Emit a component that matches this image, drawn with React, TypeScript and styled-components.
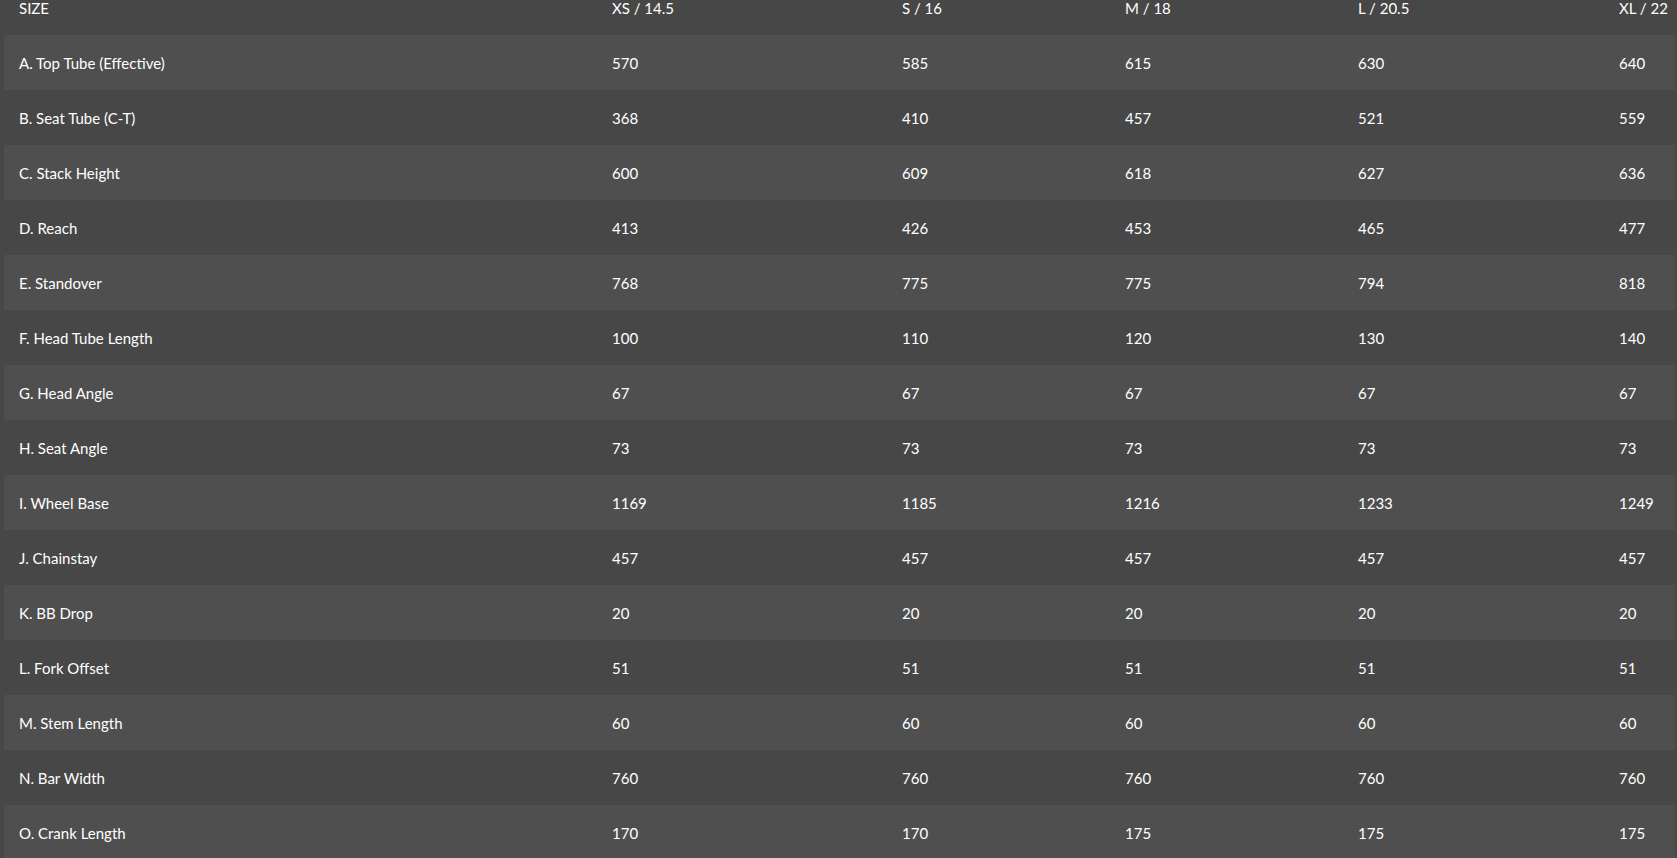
import React from "react";
import styled, { createGlobalStyle } from "styled-components";

const GlobalStyle = createGlobalStyle`
    html, body {
        margin: 0;
        padding: 0;
        background: #474747;
        overflow: hidden;
    }
`;

const Page = styled.div`
    height: 858px;
    overflow: hidden;
    padding: 0 2px 0 4px;
    font-family: Lato, "Liberation Sans", sans-serif;
    font-size: 15px;
    color: #ffffff;
`;

const Table = styled.table`
    width: 1671px;
    margin-top: -20px;
    border-collapse: collapse;
    table-layout: fixed;
`;

const HeadCell = styled.th`
    height: 55px;
    padding: 0 15px;
    text-align: left;
    font-weight: 400;
    text-transform: uppercase;
    white-space: nowrap;
`;

const Row = styled.tr<{ $striped: boolean }>`
    background: ${(p) => (p.$striped ? "#4f4f4f" : "#474747")};
`;

const Cell = styled.td`
    height: 55px;
    padding: 0 15px;
    white-space: nowrap;
`;

const COLUMN_WIDTHS = [593, 290, 223, 233, 261, 71];

const sizes = ["XS / 14.5", "S / 16", "M / 18", "L / 20.5", "XL / 22"];

const geometry: [string, number[]][] = [
    ["A. Top Tube (Effective)", [570, 585, 615, 630, 640]],
    ["B. Seat Tube (C-T)", [368, 410, 457, 521, 559]],
    ["C. Stack Height", [600, 609, 618, 627, 636]],
    ["D. Reach", [413, 426, 453, 465, 477]],
    ["E. Standover", [768, 775, 775, 794, 818]],
    ["F. Head Tube Length", [100, 110, 120, 130, 140]],
    ["G. Head Angle", [67, 67, 67, 67, 67]],
    ["H. Seat Angle", [73, 73, 73, 73, 73]],
    ["I. Wheel Base", [1169, 1185, 1216, 1233, 1249]],
    ["J. Chainstay", [457, 457, 457, 457, 457]],
    ["K. BB Drop", [20, 20, 20, 20, 20]],
    ["L. Fork Offset", [51, 51, 51, 51, 51]],
    ["M. Stem Length", [60, 60, 60, 60, 60]],
    ["N. Bar Width", [760, 760, 760, 760, 760]],
    ["O. Crank Length", [170, 170, 175, 175, 175]],
];

function App() {
    return (
        <Page>
            <GlobalStyle />
            <Table>
                <colgroup>
                    {COLUMN_WIDTHS.map((w, i) => (
                        <col key={i} style={{ width: w }} />
                    ))}
                </colgroup>
                <thead>
                    <tr>
                        <HeadCell>Size</HeadCell>
                        {sizes.map((s) => (
                            <HeadCell key={s}>{s}</HeadCell>
                        ))}
                    </tr>
                </thead>
                <tbody>
                    {geometry.map(([label, values], i) => (
                        <Row key={label} $striped={i % 2 === 0}>
                            <Cell>{label}</Cell>
                            {values.map((v, j) => (
                                <Cell key={j}>{v}</Cell>
                            ))}
                        </Row>
                    ))}
                </tbody>
            </Table>
        </Page>
    );
}

export default App;
